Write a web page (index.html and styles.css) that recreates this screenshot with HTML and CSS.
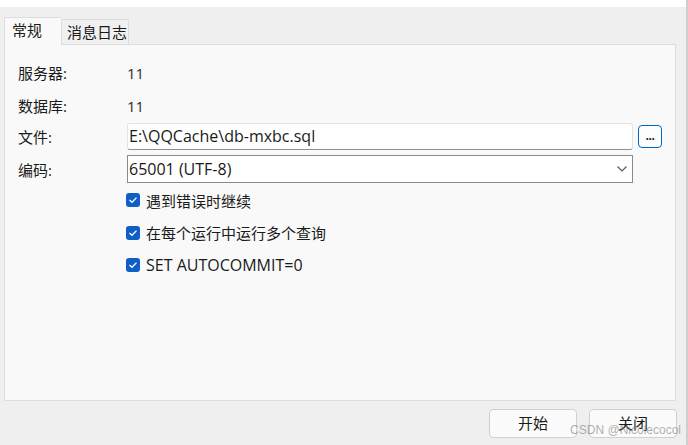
FILE: index.html
```html
<!DOCTYPE html>
<html>
<head>
<meta charset="utf-8">
<link rel="stylesheet" href="styles.css">
</head>
<body>
<div class="screen">
  <div class="topstrip"></div>
  <div class="window">
    <div class="tabs">
      <div class="tab active">常规</div>
      <div class="tab">消息日志</div>
    </div>
    <div class="panel">
      <div class="row info"><span class="label">服务器:</span><span class="value">11</span></div>
      <div class="row info"><span class="label">数据库:</span><span class="value">11</span></div>
      <div class="row field file">
        <span class="label">文件:</span>
        <div class="input">E:\QQCache\db-mxbc.sql</div>
        <div class="browse">...</div>
      </div>
      <div class="row field enc">
        <span class="label">编码:</span>
        <div class="select">
          <span>65001 (UTF-8)</span>
          <svg class="caret" width="12" height="8" viewBox="0 0 12 8"><path d="M1.5 1.5 L6 6 L10.5 1.5" fill="none" stroke="#555" stroke-width="1.1"/></svg>
        </div>
      </div>
      <div class="checks">
        <div class="check"><span class="box"><svg width="10" height="8" viewBox="0 0 10 8"><path d="M1.5 4 L4 6.3 L8.5 1.6" fill="none" stroke="#fff" stroke-width="1.3"/></svg></span>遇到错误时继续</div>
        <div class="check"><span class="box"><svg width="10" height="8" viewBox="0 0 10 8"><path d="M1.5 4 L4 6.3 L8.5 1.6" fill="none" stroke="#fff" stroke-width="1.3"/></svg></span>在每个运行中运行多个查询</div>
        <div class="check latin"><span class="box"><svg width="10" height="8" viewBox="0 0 10 8"><path d="M1.5 4 L4 6.3 L8.5 1.6" fill="none" stroke="#fff" stroke-width="1.3"/></svg></span>SET AUTOCOMMIT=0</div>
      </div>
    </div>
    <div class="footer">
      <div class="btn">开始</div>
      <div class="btn">关闭</div>
    </div>
  </div>
  <div class="watermark">CSDN @Nicolecocol</div>
</div>
</body>
</html>
```
FILE: styles.css
```css
html, body {
  margin: 0;
  padding: 0;
}
body {
  font-family: "Open Sans", "Noto Sans CJK SC", sans-serif;
  font-size: 15px;
  color: #1a1a1a;
}
.screen {
  position: relative;
  width: 688px;
  height: 445px;
  background: #efefef;
  display: flex;
  flex-direction: column;
  overflow: hidden;
}
.topstrip {
  height: 7px;
  background: #ffffff;
  border-right: 2px solid #cfcfcf;
}
.window {
  flex: 1;
  display: flex;
  flex-direction: column;
  padding-left: 4px;
  border-right: 2px solid #cfcfcf;
}
.tabs {
  display: flex;
  align-items: flex-end;
  height: 37px;
}
.tab {
  height: 25px;
  line-height: 24px;
  padding: 0 5px;
  border: 1px solid #dcdcdc;
  border-bottom: none;
  background: #f0f0f0;
  box-sizing: border-box;
  width: 68px;
  white-space: nowrap;
}
.tab.active {
  height: 28px;
  line-height: 24px;
  width: 57px;
  padding: 0 7px;
  background: #f9f9f9;
  margin-bottom: -1px;
  position: relative;
  z-index: 1;
  border-right: none;
}
.panel {
  width: 672px;
  height: 357px;
  box-sizing: border-box;
  background: #f9f9f9;
  border: 1px solid #dcdcdc;
  padding: 11px 0 0 13px;
}
.row {
  display: flex;
  align-items: center;
}
.label {
  width: 109px;
  flex: none;
}
.info {
  height: 33px;
}
.info .value {
  color: #2b2b2b;
}
.file {
  margin-top: 1px;
  height: 27px;
}
.enc {
  margin-top: 5px;
  height: 28px;
}
.input {
  width: 506px;
  height: 27px;
  box-sizing: border-box;
  background: #ffffff;
  border: 1px solid #e3e3e3;
  border-bottom: 1px solid #8e8e8e;
  border-radius: 3px;
  line-height: 25px;
  padding-left: 1px;
  font-size: 16px;
}
.browse {
  margin-left: 5px;
  width: 24px;
  height: 23px;
  box-sizing: border-box;
  border: 1px solid #0067c0;
  border-radius: 4px;
  background: #fdfdfd;
  color: #1a1a1a;
  font-size: 12px;
  line-height: 20px;
  text-align: center;
  font-weight: bold;
  letter-spacing: -0.5px;
}
.select {
  width: 506px;
  height: 28px;
  box-sizing: border-box;
  background: #ffffff;
  border: 1px solid #8a8a8a;
  display: flex;
  align-items: center;
  justify-content: space-between;
  padding: 0 4px 0 1px;
  font-size: 16px;
}
.caret {
  display: block;
}
.checks {
  margin-top: 1px;
  padding-left: 108px;
  display: flex;
  flex-direction: column;
}
.check {
  height: 32.5px;
  display: flex;
  align-items: center;
}
.check.latin {
  font-size: 16px;
}
.box {
  width: 14px;
  height: 14px;
  border-radius: 3px;
  background: #0f5ec8;
  margin-right: 6px;
  display: flex;
  align-items: center;
  justify-content: center;
}
.box svg {
  display: block;
}
.footer {
  flex: 1;
  display: flex;
  justify-content: flex-end;
  align-items: flex-start;
  padding-top: 8px;
  padding-right: 9px;
  gap: 12px;
}
.btn {
  width: 88px;
  height: 29px;
  box-sizing: border-box;
  border: 1px solid #d0d0d0;
  border-radius: 4px;
  background: #fbfbfb;
  text-align: center;
  line-height: 27px;
}
.watermark {
  position: absolute;
  right: 7px;
  bottom: 8px;
  font-size: 12px;
  color: rgba(140, 140, 140, 0.7);
  font-family: "Liberation Sans", sans-serif;
}
```
